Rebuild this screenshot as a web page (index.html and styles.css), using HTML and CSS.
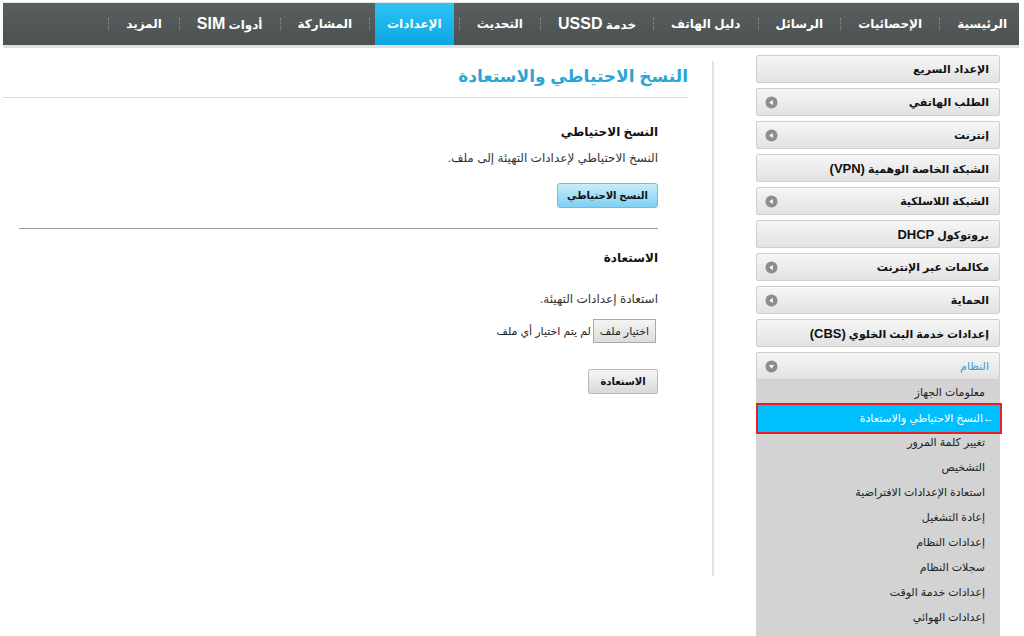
FILE: index.html
```html
<!DOCTYPE html>
<html lang="ar" dir="rtl">
<head>
<meta charset="utf-8">
<title>النسخ الاحتياطي والاستعادة</title>
<link rel="stylesheet" href="styles.css">
</head>
<body>
<div class="topline"></div>
<nav class="nav">
  <a class="nav-item">الرئيسية</a><span class="sep"></span>
  <a class="nav-item">الإحصائيات</a><span class="sep"></span>
  <a class="nav-item">الرسائل</a><span class="sep"></span>
  <a class="nav-item">دليل الهاتف</a><span class="sep"></span>
  <a class="nav-item"><span>خدمة <span class="lat">USSD</span></span></a><span class="sep"></span>
  <a class="nav-item">التحديث</a><span class="sep"></span>
  <a class="nav-item active">الإعدادات</a><span class="sep"></span>
  <a class="nav-item">المشاركة</a><span class="sep"></span>
  <a class="nav-item"><span>أدوات <span class="lat">SIM</span></span></a><span class="sep"></span>
  <a class="nav-item">المزيد</a><span class="sep"></span>
</nav>
<div class="navline"></div>
<div class="layout">
  <aside class="side">
    <div class="menu-item"><span>الإعداد السريع</span></div>
    <div class="menu-item"><span>الطلب الهاتفي</span><svg class="ico" viewBox="0 0 14 14"><circle cx="7" cy="7" r="6.5" fill="#8d8d8d"/><path d="M4.5 7 L8.5 4.3 L8.5 9.7 Z" fill="#fff"/></svg></div>
    <div class="menu-item"><span>إنترنت</span><svg class="ico" viewBox="0 0 14 14"><circle cx="7" cy="7" r="6.5" fill="#8d8d8d"/><path d="M4.5 7 L8.5 4.3 L8.5 9.7 Z" fill="#fff"/></svg></div>
    <div class="menu-item"><span>الشبكة الخاصة الوهمية <span class="lat">(VPN)</span></span></div>
    <div class="menu-item"><span>الشبكة اللاسلكية</span><svg class="ico" viewBox="0 0 14 14"><circle cx="7" cy="7" r="6.5" fill="#8d8d8d"/><path d="M4.5 7 L8.5 4.3 L8.5 9.7 Z" fill="#fff"/></svg></div>
    <div class="menu-item"><span>بروتوكول <span class="lat">DHCP</span></span></div>
    <div class="menu-item"><span>مكالمات عبر الإنترنت</span><svg class="ico" viewBox="0 0 14 14"><circle cx="7" cy="7" r="6.5" fill="#8d8d8d"/><path d="M4.5 7 L8.5 4.3 L8.5 9.7 Z" fill="#fff"/></svg></div>
    <div class="menu-item"><span>الحماية</span><svg class="ico" viewBox="0 0 14 14"><circle cx="7" cy="7" r="6.5" fill="#8d8d8d"/><path d="M4.5 7 L8.5 4.3 L8.5 9.7 Z" fill="#fff"/></svg></div>
    <div class="menu-item"><span>إعدادات خدمة البث الخلوي <span class="lat">(CBS)</span></span></div>
    <div class="menu-item open"><span>النظام</span><svg class="ico" viewBox="0 0 14 14"><circle cx="7" cy="7" r="6.5" fill="#8d8d8d"/><path d="M4.3 5.5 L9.7 5.5 L7 9.3 Z" fill="#fff"/></svg></div>
    <ul class="sub">
      <li>معلومات الجهاز</li>
      <li class="current">←النسخ الاحتياطي والاستعادة</li>
      <li>تغيير كلمة المرور</li>
      <li>التشخيص</li>
      <li>استعادة الإعدادات الافتراضية</li>
      <li>إعادة التشغيل</li>
      <li>إعدادات النظام</li>
      <li>سجلات النظام</li>
      <li>إعدادات خدمة الوقت</li>
      <li>إعدادات الهوائي</li>
    </ul>
  </aside>
  <main class="main">
    <h1 class="title">النسخ الاحتياطي والاستعادة</h1>
    <section class="sec">
      <h2 class="sec-title">النسخ الاحتياطي</h2>
      <p class="desc">النسخ الاحتياطي لإعدادات التهيئة إلى ملف.</p>
      <button class="btn btn-blue">النسخ الاحتياطي</button>
    </section>
    <hr class="rule">
    <section class="sec">
      <h2 class="sec-title second">الاستعادة</h2>
      <p class="desc desc2">استعادة إعدادات التهيئة.</p>
      <div class="file"><span class="file-btn">اختيار ملف</span><span class="file-name">لم يتم اختيار أي ملف</span></div>
      <button class="btn btn-gray">الاستعادة</button>
    </section>
  </main>
</div>
</body>
</html>
```
FILE: styles.css
```css
* { box-sizing: border-box; }
html, body { margin: 0; padding: 0; background: #fff; }
body {
  font-family: "Liberation Sans", "DejaVu Sans", sans-serif;
  font-size: 12px;
  color: #222;
  width: 1024px;
  overflow: hidden;
}
.lat { font-family: "Liberation Sans", sans-serif; }

.topline { height: 3px; border-bottom: 1px solid #e4e4e4; margin: 0 5px 0 3px; }
.nav {
  margin: 0 5px 0 3px;
  height: 42px;
  background: linear-gradient(#5a5f5f, #4b5050);
  display: flex;
  align-items: stretch;
}
.nav-item {
  display: flex;
  align-items: center;
  padding: 0 12px;
  color: #fff;
  font-weight: bold;
  font-size: 12px;
  white-space: nowrap;
}
.nav-item .lat { font-size: 16px; }
.nav-item.active { background: linear-gradient(#2cc3f3, #0ea6e3); }
.sep {
  width: 0;
  align-self: center;
  height: 12px;
  border-left: 1px dotted #8d9292;
  margin: 0 5px;
}
.navline { height: 3px; margin: 0 5px 0 3px; background: #e0e0e0; }

.layout { display: flex; align-items: flex-start; }

.side {
  width: 244px;
  margin-right: 24px;
  margin-top: 7px;
  flex: none;
}
.menu-item {
  height: 28px;
  margin-bottom: 5px;
  border: 1px solid #cfcfcf;
  border-radius: 2px;
  background: linear-gradient(#f6f6f6, #e2e2e2);
  display: flex;
  align-items: center;
  justify-content: space-between;
  padding: 0 10px 0 8px;
  font-weight: bold;
  font-size: 11px;
  color: #111;
}
.menu-item .lat { font-size: 13px; }
.ico { width: 13px; height: 13px; }
.menu-item.open {
  margin-bottom: 0;
  color: #2aa3d6;
  font-weight: normal;
  border-radius: 2px 2px 0 0;
}
.sub {
  list-style: none;
  margin: 0;
  padding: 0 0 8px;
  background: #d3d3d3;
}
.sub li {
  height: 25px;
  line-height: 25px;
  padding-right: 15px;
  font-size: 11px;
  color: #222;
}
.sub li.current {
  background: #00bfff;
  color: #fff;
  padding-right: 6px;
  height: 31px;
  line-height: 27px;
  border: 2px solid #e8202a;
  margin: -2px -2px -4px 0;
  position: relative;
}

.main {
  width: 711px;
  margin-right: 42px;
  margin-top: 13px;
  border-right: 2px solid #e3e3e3;
  min-height: 515px;
  flex: none;
}
.title {
  margin: 0 24px 0 0;
  padding: 5px 0 10px;
  font-size: 17px;
  font-weight: bold;
  color: #2aa5d8;
  border-bottom: 1px solid #dcdcdc;
}
.sec { margin-right: 54px; }
.sec-title {
  margin: 27px 0 0;
  font-size: 12px;
  font-weight: bold;
  color: #111;
}
.sec-title.second { margin-top: 22px; }
.desc { margin: 12px 0 0; font-size: 12px; color: #333; }
.desc2 { margin-top: 27px; }
.btn {
  display: block;
  margin: 18px 0 0;
  font-family: inherit;
  font-size: 10px;
  font-weight: bold;
  height: 25px;
  border-radius: 3px;
  color: #111;
  white-space: nowrap;
  padding: 0;
  cursor: pointer;
}
.btn-blue {
  width: 101px;
  border: 1px solid #7bb8d6;
  background: linear-gradient(#c9edfb, #7dd0f2);
}
.btn-gray {
  width: 70px;
  border: 1px solid #b9b9b9;
  background: linear-gradient(#f6f6f6, #d9d9d9);
  margin-top: 26px;
  border-radius: 2px;
}
.rule {
  border: 0;
  border-top: 1px solid #9a9a9a;
  margin: 20px 54px 0 16px;
}
.file { display: flex; align-items: center; margin-top: 13px; }
.file-btn {
  display: inline-block;
  height: 24px;
  line-height: 22px;
  padding: 0 6px;
  border: 1px solid #a9a9a9;
  background: linear-gradient(#f4f4f4, #dcdcdc);
  font-size: 11px;
  margin-right: 2px;
}
.file-name { font-size: 11px; margin-right: 2px; }
```
